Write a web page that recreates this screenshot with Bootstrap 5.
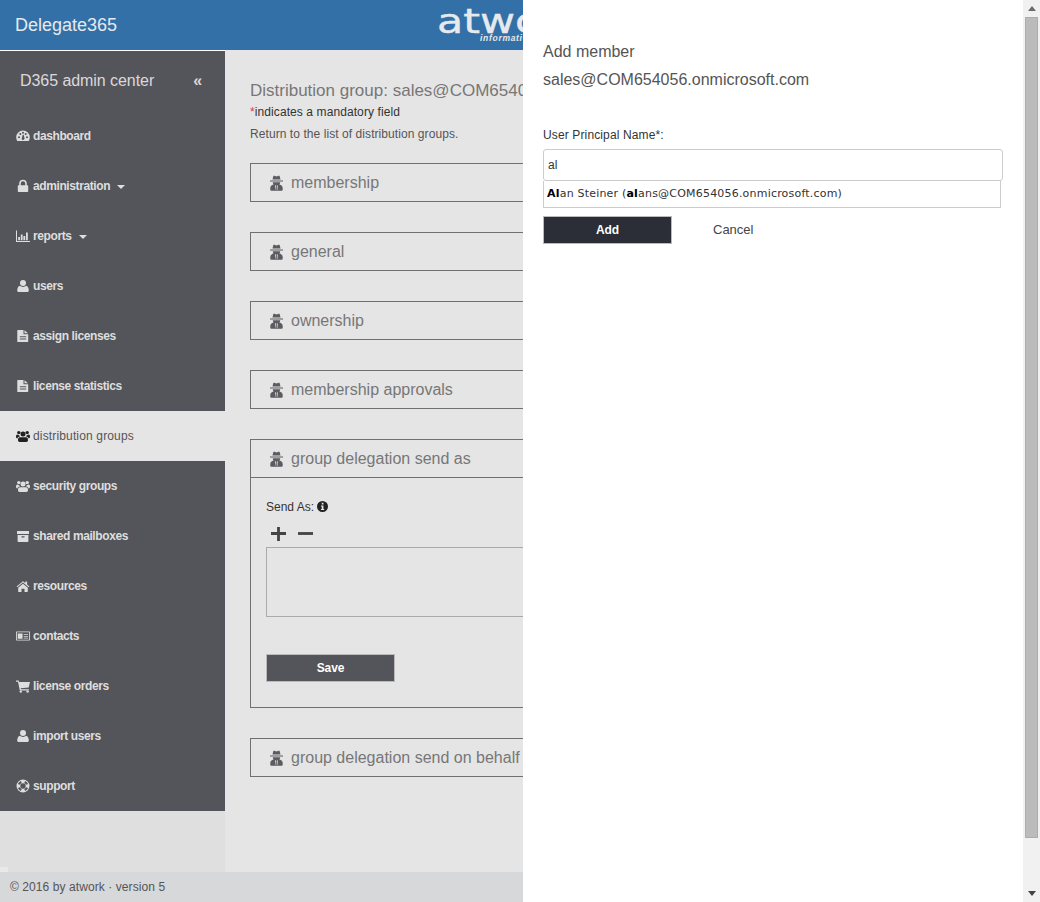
<!DOCTYPE html>
<html lang="en">
<head>
<meta charset="utf-8">
<title>Delegate365</title>
<link href="https://cdn.jsdelivr.net/npm/bootstrap@5.3.0/dist/css/bootstrap.min.css" rel="stylesheet">
<style>
html,body{height:100%}
body{font-family:"Liberation Sans",Arial,sans-serif;font-size:12px;color:#444;background:#e5e5e5;overflow:hidden}
.topbar{height:50px;background:#3270a7;color:#e6eaee;padding-left:15px;flex:none}
.brand-name{font-size:18px;width:422px;flex:none}
.logo-box{line-height:1;margin-top:-2px;white-space:nowrap;width:86px;overflow:hidden;flex:none}
.logo-word{font-family:"DejaVu Sans",sans-serif;font-size:34px;display:block;height:29px;line-height:33px;transform:scaleX(1.26);transform-origin:left;color:#e6eaee;-webkit-text-stroke:.4px #e6eaee}
.logo-tag{font-size:8.5px;font-weight:700;font-style:italic;display:block;margin-left:43px;letter-spacing:.7px}
.workarea{flex:1 1 auto;min-height:0}
.sidenav{width:225px;flex:none;background:#dfdfdf;border-top:1px solid #fff}
.side-inner{background:#54555a}
.side-title{height:60px;padding:0 20px;color:#dcd8da;font-size:16px;letter-spacing:-.06px}
.side-collapse{font-size:16px;margin-right:3px;font-weight:700}
.side-item{height:50px;padding-left:15px;color:#dedede;font-weight:700;text-decoration:none;letter-spacing:-.4px}
.side-item:hover{color:#dedede}
.side-item.is-active{background:#e5e5e5;color:#555;font-weight:400;letter-spacing:.15px}
.side-item.is-active .ico{color:#222}
.ico-slot{width:15px;margin-right:3px;flex:none;text-align:center;display:flex;justify-content:center}
.ico{width:14px;height:14px;fill:currentColor;display:block}
.caret-down{border-left:4px solid transparent;border-right:4px solid transparent;border-top:4px solid #dedede;margin-left:7px;margin-top:1px}
.maincol{padding:30px 25px 0;width:298px;flex:none;overflow:hidden;background:#e5e5e5}
.page-head{font-size:17px;color:#777;line-height:22px;white-space:nowrap}
.mand{line-height:18px;color:#333;margin-top:1px;letter-spacing:.09px}
.mand i{font-style:normal;color:#e0355a}
.ret-line{line-height:18px;margin-top:4px;color:#555;margin-bottom:20px;letter-spacing:.07px}
.sect{border:1px solid #707070;width:790px;margin-bottom:30px}
.sect-head{height:37px;padding-left:19px;font-size:16px;color:#777;white-space:nowrap}
.sect-head .ico{color:#5b5b60;width:13px;height:16px;margin-right:8px}
.sect-body{border-top:1px solid #707070;padding:20px 15px 25px;height:230px}
.sa-label{line-height:18px;color:#333}
.info-ico{width:11px;height:11px;color:#222;vertical-align:-1px;display:inline-block;fill:currentColor}
.pm-row{height:22px;padding-left:5px;color:#444;margin-top:6px;margin-bottom:3px}
.pm-row svg{width:15px;height:15px;fill:currentColor;margin-right:12px}
.list-area{height:70px;border:1px solid #aaa;margin-bottom:37px}
.act-btn{width:129px;height:28px;border:1px solid #bbb;border-radius:0;color:#fff;font-weight:700;font-size:12px;padding:0;line-height:1;letter-spacing:-.1px}
.act-btn:hover{color:#fff}
.act-save,.act-save:hover{background:#54555a}
.act-add,.act-add:hover{background:#2b2e36}
.foot{height:30px;background:#d7d8da;padding-left:10px;color:#555;letter-spacing:.08px;flex:none}
.panel{position:absolute;top:0;right:0;bottom:0;width:517px;background:#fff;z-index:5}
.panel-body{width:500px;padding:41px 20px 0;flex:none}
.panel-t{font-size:16px;line-height:22px;color:#555}
.panel-sub{font-size:16px;line-height:22px;color:#555;margin-top:6px;margin-bottom:35px}
.upn-label{line-height:18px;color:#333;margin-bottom:5px;letter-spacing:.13px}
.upn-input{height:32px;width:460px;border:1px solid #ccc;border-radius:3px;padding:0 4px;font-size:12px;color:#333;box-shadow:none}
.sugg{width:458px;height:27px;border:1px solid #ccc;border-top:0;padding:1px 0 0 3px;font-family:"DejaVu Sans",sans-serif;font-size:11px;color:#333;white-space:nowrap;margin-bottom:8px;letter-spacing:.2px}
.sugg b{color:#000}
.cancel-link{margin-left:41px;color:#444;text-decoration:none;font-size:13px}
.scroller{width:17px;background:#f1f1f1;flex:none}
.arr-up{width:0;height:0;border-left:4px solid transparent;border-right:4px solid transparent;border-bottom:5px solid #6a6a6a;margin:6px auto 6px}
.arr-dn{width:0;height:0;border-left:4px solid transparent;border-right:4px solid transparent;border-top:5px solid #444;margin:auto auto 6px}
.thumb{width:13px;height:821px;margin:0 auto;background:#bbb;border:1px solid #adadad}
.corner-bit{width:8px;height:5px;background:#e9e9e9;margin-top:auto}
</style>
</head>
<body class="d-flex flex-column position-relative">
<svg width="0" height="0" class="position-absolute">
<defs>
<symbol id="i-dash" viewBox="0 0 14 14"><path fill-rule="evenodd" d="M7 1.500A6.800 6.800 0 0 0 .2 8.300c0 1.300.3 2.400.9 3.500.1.2.3.3.6.3h10.600c.3 0 .5-.1.6-.3.6-1.100.9-2.200.9-3.500A6.800 6.800 0 0 0 7 1.500zM3 9.300a1 1 0 1 1 0-2 1 1 0 0 1 0 2zm1.300-3.300a1 1 0 1 1 0-2 1 1 0 0 1 0 2zM7 4.800a1 1 0 1 1 0-2 1 1 0 0 1 0 2zm1.200 5.400a1.300 1.300 0 0 1-2.500-.5l1-4h1l.9 4a1.300 1.300 0 0 1-.4.500zm1.500-4.200a1 1 0 1 1 0-2 1 1 0 0 1 0 2zM11 9.300a1 1 0 1 1 0-2 1 1 0 0 1 0 2z"/></symbol>
<symbol id="i-lock" viewBox="0 0 14 14"><path fill-rule="evenodd" d="M2.500 6.200h.7V4.500a3.800 3.800 0 0 1 7.600 0v1.700h.7c.4 0 .7.300.7.700v5.400c0 .4-.3.700-.7.700H2.500a.7.700 0 0 1-.7-.7V6.900c0-.4.300-.7.700-.7zm2.300 0h4.400V4.500a2.200 2.200 0 0 0-4.400 0z"/></symbol>
<symbol id="i-bars" viewBox="0 0 14 14"><path d="M0 1.500h1v10.500h13v1H0zM2.200 8h1.800v3.300H2.200zM4.800 5.500h1.800v5.800H4.800zM7.400 7h1.800v4.300H7.400zM10 3.500h1.800v7.800H10z"/></symbol>
<symbol id="i-user" viewBox="0 0 14 14"><circle cx="7" cy="4" r="3"/><path d="M4 6.800C4.800 7.500 5.800 8 7 8s2.200-.5 3-1.200c1 .1 1.600.6 2 1.500.5 1 .8 2.100.8 3.200 0 .9-.6 1.500-1.500 1.500H2.700c-.9 0-1.500-.6-1.500-1.500 0-1.100.3-2.200.8-3.200.4-.9 1-1.400 2-1.500z"/></symbol>
<symbol id="i-file" viewBox="0 0 14 14"><path fill-rule="evenodd" d="M1.800 1h5.700v4.200h4.700v7.300c0 .3-.2.500-.5.500H1.800a.5.500 0 0 1-.5-.5v-11c0-.3.200-.5.500-.5zM8.500 1.200l3.500 3H8.500zM3.800 7.300v1h6.400v-1zm0 2.300v1h6.400v-1z"/></symbol>
<symbol id="i-users" viewBox="0 0 14 14"><circle cx="7" cy="5" r="2.500"/><circle cx="2.800" cy="3.600" r="1.700"/><circle cx="11.200" cy="3.600" r="1.700"/><path d="M3.800 8.300h6.400c1.200 0 1.800 1.200 1.800 3 0 1-.7 1.700-1.700 1.700H3.700c-1 0-1.700-.7-1.700-1.700 0-1.800.6-3 1.800-3zM0 7.500c0-1 .5-1.900 1.500-1.900.5.500 1.200.600 1.700.600.200.700.500 1 .8 1.300-1.300.2-2.300.8-2.700 2C.5 9.500 0 8.600 0 7.500zM14 7.500c0-1-.5-1.900-1.500-1.900-.5.500-1.200.600-1.700.600-.200.700-.5 1-.8 1.300 1.300.2 2.300.8 2.700 2 .8 0 1.300-.9 1.300-2z"/></symbol>
<symbol id="i-box" viewBox="0 0 14 14"><path fill-rule="evenodd" d="M1 2h12v3H1zM1.600 6h10.800v6.300c0 .4-.3.700-.7.700H2.300a.7.700 0 0 1-.7-.7zm3.900 1.300v1.200h3V7.300z"/></symbol>
<symbol id="i-home" viewBox="0 0 14 14"><path d="M7 2.200 .6 7.500l.7.800L7 3.600l5.700 4.700.7-.8-2.300-1.900V2.500h-1.700v1.400zM7 4.700l-4.800 4v3.800c0 .3.200.5.500.5h2.800V9.800h3V13h2.800c.3 0 .5-.2.500-.5V8.700z"/></symbol>
<symbol id="i-card" viewBox="0 0 16 14"><path fill-rule="evenodd" d="M1 1.800h14c.5 0 1 .5 1 1v8.400c0 .5-.5 1-1 1H1c-.5 0-1-.5-1-1V2.800c0-.5.5-1 1-1zm0 1v8.400h14V2.800zm1 1.200h5.500v6H2zm6.800 1h5v.8h-5zm0 2h5v.8h-5zm0 2h5v.8h-5z"/></symbol>
<symbol id="i-cart" viewBox="0 0 14 14"><path d="M0 1.500h2.700l.4 1.500H14l-1.300 5.600-8 .7.200 1h8v1.200H3.800L2 2.700H0z"/><circle cx="4.800" cy="12.600" r="1.200"/><circle cx="11.600" cy="12.600" r="1.200"/></symbol>
<symbol id="i-ring" viewBox="0 0 14 14"><path fill-rule="evenodd" d="M7 .5a6.500 6.500 0 1 1 0 13 6.500 6.500 0 0 1 0-13zm0 3.800a2.700 2.700 0 1 0 0 5.400 2.700 2.700 0 0 0 0-5.400zM4.900 1.900a5.500 5.500 0 0 0-3 3l2 .8a3.400 3.400 0 0 1 1.800-1.800zm4.200 0-.8 2a3.400 3.400 0 0 1 1.800 1.800l2-.8a5.500 5.500 0 0 0-3-3zM3.900 8.300l-2 .8a5.500 5.500 0 0 0 3 3l.8-2a3.400 3.400 0 0 1-1.800-1.800zm6.200 0a3.400 3.400 0 0 1-1.800 1.800l.8 2a5.500 5.500 0 0 0 3-3z"/></symbol>
<symbol id="i-info" viewBox="0 0 14 14"><path fill-rule="evenodd" d="M7 0a7 7 0 1 1 0 14A7 7 0 0 1 7 0zM6 2.300v2h2.200v-2zM5 5.600v1.300h1v3.300H5v1.400h4.200v-1.400h-1V5.600z"/></symbol>
<symbol id="i-spy" viewBox="0 0 13 16"><path fill-rule="evenodd" d="M4 .8c.8 0 1.500.6 2.500.6S8.200.8 9 .8c.5 0 .7.500.9 1.200l.6 2.500H2.500L3.100 2C3.300 1.300 3.500.8 4 .8zM0 5.500h13v1H0zM2.800 7.200h7.400c0 1-.3 1.800-.8 2.300 2 .4 3.300 1.800 3.300 3.500v1.800c0 .5-.4.900-.9.900H1.200a.9.900 0 0 1-.9-.9V13c0-1.700 1.300-3.100 3.300-3.500-.5-.5-.8-1.300-.8-2.300zM5 10.300 5.800 15h.4V10.600zm3 0-.8.300V15h.4z"/></symbol>
</defs>
</svg>

<header class="topbar d-flex align-items-center">
  <div class="brand-name">Delegate365</div>
  <div class="logo-box">
    <span class="logo-word">atwork</span>
    <span class="logo-tag">information technology</span>
  </div>
</header>

<div class="workarea d-flex">
  <nav class="sidenav d-flex flex-column">
    <div class="side-inner">
      <div class="side-title d-flex align-items-center justify-content-between"><span>D365 admin center</span><span class="side-collapse">«</span></div>
      <a class="side-item d-flex align-items-center" href="#"><span class="ico-slot"><svg class="ico"><use href="#i-dash"/></svg></span>dashboard</a>
      <a class="side-item d-flex align-items-center" href="#"><span class="ico-slot"><svg class="ico"><use href="#i-lock"/></svg></span>administration<span class="caret-down"></span></a>
      <a class="side-item d-flex align-items-center" href="#"><span class="ico-slot"><svg class="ico"><use href="#i-bars"/></svg></span>reports<span class="caret-down"></span></a>
      <a class="side-item d-flex align-items-center" href="#"><span class="ico-slot"><svg class="ico"><use href="#i-user"/></svg></span>users</a>
      <a class="side-item d-flex align-items-center" href="#"><span class="ico-slot"><svg class="ico"><use href="#i-file"/></svg></span>assign licenses</a>
      <a class="side-item d-flex align-items-center" href="#"><span class="ico-slot"><svg class="ico"><use href="#i-file"/></svg></span>license statistics</a>
      <a class="side-item is-active d-flex align-items-center" href="#"><span class="ico-slot"><svg class="ico"><use href="#i-users"/></svg></span>distribution groups</a>
      <a class="side-item d-flex align-items-center" href="#"><span class="ico-slot"><svg class="ico"><use href="#i-users"/></svg></span>security groups</a>
      <a class="side-item d-flex align-items-center" href="#"><span class="ico-slot"><svg class="ico"><use href="#i-box"/></svg></span>shared mailboxes</a>
      <a class="side-item d-flex align-items-center" href="#"><span class="ico-slot"><svg class="ico"><use href="#i-home"/></svg></span>resources</a>
      <a class="side-item d-flex align-items-center" href="#"><span class="ico-slot"><svg class="ico"><use href="#i-card"/></svg></span>contacts</a>
      <a class="side-item d-flex align-items-center" href="#"><span class="ico-slot"><svg class="ico"><use href="#i-cart"/></svg></span>license orders</a>
      <a class="side-item d-flex align-items-center" href="#"><span class="ico-slot"><svg class="ico"><use href="#i-user"/></svg></span>import users</a>
      <a class="side-item d-flex align-items-center" href="#"><span class="ico-slot"><svg class="ico"><use href="#i-ring"/></svg></span>support</a>
    </div>
    <div class="corner-bit"></div>
  </nav>
  <main class="maincol">
    <div class="page-head">Distribution group: sales@COM654056.onmicrosoft.com</div>
    <div class="mand"><i>*</i>indicates a mandatory field</div>
    <div class="ret-line">Return to the list of distribution groups.</div>
    <section class="sect"><div class="sect-head d-flex align-items-center"><svg class="ico"><use href="#i-spy"/></svg>membership</div></section>
    <section class="sect"><div class="sect-head d-flex align-items-center"><svg class="ico"><use href="#i-spy"/></svg>general</div></section>
    <section class="sect"><div class="sect-head d-flex align-items-center"><svg class="ico"><use href="#i-spy"/></svg>ownership</div></section>
    <section class="sect"><div class="sect-head d-flex align-items-center"><svg class="ico"><use href="#i-spy"/></svg>membership approvals</div></section>
    <section class="sect">
      <div class="sect-head d-flex align-items-center"><svg class="ico"><use href="#i-spy"/></svg>group delegation send as</div>
      <div class="sect-body">
        <div class="sa-label">Send As: <svg class="info-ico"><use href="#i-info"/></svg></div>
        <div class="pm-row d-flex align-items-center">
          <svg viewBox="0 0 16 16"><path d="M6.500 1h3v5.500H16v3H9.500V16h-3V9.500H0v-3h6.500z"/></svg>
          <svg viewBox="0 0 16 16"><path d="M0 6.500h16v3H0z"/></svg>
        </div>
        <div class="list-area"></div>
        <button type="button" class="btn act-btn act-save">Save</button>
      </div>
    </section>
    <section class="sect"><div class="sect-head d-flex align-items-center"><svg class="ico"><use href="#i-spy"/></svg>group delegation send on behalf</div></section>
  </main>
</div>

<footer class="foot d-flex align-items-center">© 2016 by atwork · version 5</footer>

<aside class="panel d-flex">
  <div class="panel-body">
    <div class="panel-t">Add member</div>
    <div class="panel-sub">sales@COM654056.onmicrosoft.com</div>
    <div class="upn-label">User Principal Name*:</div>
    <input type="text" class="form-control upn-input" value="al">
    <div class="sugg d-flex align-items-center"><span><b>Al</b>an Steiner (<b>al</b>ans@COM654056.onmicrosoft.com)</span></div>
    <div class="d-flex align-items-center">
      <button type="button" class="btn act-btn act-add">Add</button>
      <a href="#" class="cancel-link">Cancel</a>
    </div>
  </div>
  <div class="scroller d-flex flex-column">
    <div class="arr-up"></div>
    <div class="thumb"></div>
    <div class="arr-dn"></div>
  </div>
</aside>
<script src="https://cdn.jsdelivr.net/npm/bootstrap@5.3.0/dist/js/bootstrap.bundle.min.js"></script>
</body>
</html>
